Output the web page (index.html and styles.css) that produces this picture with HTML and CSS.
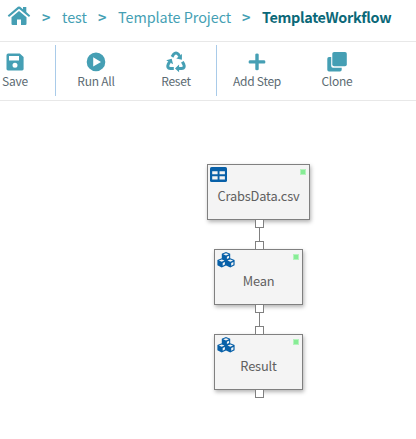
FILE: index.html
```html
<!DOCTYPE html>
<html lang="en">
<head>
<meta charset="utf-8">
<title>TemplateWorkflow</title>
<link rel="stylesheet" href="styles.css">
</head>
<body>
<svg width="0" height="0" class="defs" aria-hidden="true">
  <symbol id="cubes" viewBox="0 0 18 16">
    <path class="cube" d="M9 .1 13.2 1.7V6.3L17.6 8V13.3L13.3 15.6 9 13.5 4.7 15.6.4 13.3V8L4.8 6.3V1.7Z"/>
    <path class="cube-top" d="M6.2 2.3 9 1.2 11.8 2.3 9 3.4ZM1.9 8.6 4.7 7.5 7.5 8.6 4.7 9.7ZM10.5 8.6 13.3 7.5 16.1 8.6 13.3 9.7Z"/>
    <path class="cube-side" d="M9.9 4.7 12.1 3.8V6L9.9 6.9ZM5.7 11 7.9 10.1V12.5L5.7 13.7ZM14.2 11 16.4 10.1V12.5L14.2 13.7Z"/>
  </symbol>
</svg>
<nav class="breadcrumb">
  <svg class="home" width="24" height="20" viewBox="0 0 24 20"><path d="M12 4.9 19.5 11.2V17.8Q19.5 19 18.3 19H14V13.4H10V19H5.7Q4.5 19 4.5 17.8V11.2Z"/><path d="M12 .4Q12.6.4 13.1.8L16 3.2V1H19.3V6L23.2 9.4 22 10.9 12 2.7 2 10.9.7 9.4 10.9.8Q11.4.4 12 .4Z"/></svg>
  <b class="sep">&gt;</b>
  <a class="crumb c1">test</a>
  <b class="sep">&gt;</b>
  <a class="crumb c2">Template Project</a>
  <b class="sep">&gt;</b>
  <b class="crumb current">TemplateWorkflow</b>
</nav>
<div class="toolbar">
  <div class="group">
    <div class="tool"><svg width="22" height="22" viewBox="0 0 22 22"><path fill-rule="evenodd" d="M4.2 2.5H15.8L19.6 6V18Q19.6 19.4 18.1 19.4H4Q2.5 19.4 2.5 18V4.2Q2.5 2.5 4.2 2.5ZM5 5V9.5H15V5ZM11 11.8A2.5 2.5 0 1 0 11 16.8 2.5 2.5 0 1 0 11 11.8Z"/></svg><span>Save</span></div>
  </div>
  <div class="group">
    <div class="tool"><svg width="22" height="22" viewBox="0 0 22 22"><path fill-rule="evenodd" d="M11 1.6A9.3 9.3 0 1 0 11 20.2 9.3 9.3 0 1 0 11 1.6ZM8.2 6.3 16 10.9 8.2 15.5Z"/></svg><span>Run All</span></div>
    <div class="tool"><svg width="22" height="22" viewBox="0 0 22 22"><g class="recycle-lines"><path d="M7 5.9 8.6 3.3Q11 .8 13.4 3.3L14.6 5.3"/><path d="M17.4 10.8 18.7 13.2Q20.4 17.1 16.6 17.6H13.6"/><path d="M8.8 17.6H5.4Q1.6 17.1 3.2 13.4L4.6 10.8"/></g><path d="M16.9 3.1V8.7L11.3 7.4ZM14.1 13.6V21.2L10 17.5ZM1.2 9.2 6.7 7.8 8.1 13.2Z"/></svg><span>Reset</span></div>
  </div>
  <div class="group last">
    <div class="tool"><svg width="22" height="22" viewBox="0 0 22 22"><path d="M9.3 3.6Q9.3 2.5 11 2.5T12.7 3.6V9.3H18.2Q19.4 9.3 19.4 10.9T18.2 12.5H12.7V18.2Q12.7 19.3 11 19.3T9.3 18.2V12.5H3.8Q2.6 12.5 2.6 10.9T3.8 9.3H9.3Z"/></svg><span>Add Step</span></div>
    <div class="tool"><svg width="22" height="22" viewBox="0 0 22 22"><rect x="6.3" y="1" width="14.5" height="14.3" rx="1.8"/><path d="M5.2 6H3Q1.3 6 1.3 7.8V18.7Q1.3 20.5 3 20.5H14Q15.7 20.5 15.7 18.7V16.8H7Q5.2 16.8 5.2 15Z"/></svg><span>Clone</span></div>
  </div>
</div>
<main class="canvas">
  <div class="node wide">
    <svg class="icon" width="17" height="15" viewBox="0 0 17 15"><rect width="17" height="15" rx="1.6"/><path class="cube-side" d="M2.2 4.2H7.6V7.2H2.2ZM9.5 4.2H14.9V7.2H9.5ZM2.2 9.3H7.6V12.4H2.2ZM9.5 9.3H14.9V12.4H9.5Z"/></svg>
    <i class="status"></i><span>CrabsData.csv</span>
  </div>
  <div class="port out"></div><div class="link"></div><div class="port in"></div>
  <div class="node">
    <svg class="icon" width="18" height="16"><use href="#cubes"/></svg>
    <i class="status"></i><span>Mean</span>
  </div>
  <div class="port out"></div><div class="link"></div><div class="port in"></div>
  <div class="node">
    <svg class="icon" width="18" height="16"><use href="#cubes"/></svg>
    <i class="status"></i><span>Result</span>
  </div>
  <div class="port out"></div>
</main>
</body>
</html>
```

FILE: styles.css
```css
* { box-sizing: border-box; }
body {
  margin: 0;
  background: #fff;
  overflow: hidden;
  font-family: "Noto Sans CJK SC", "Noto Sans", sans-serif;
}
svg { display: block; flex: none; }
.defs { position: absolute; }
.breadcrumb {
  height: 42px;
  border-bottom: 1px solid #e8e8e8;
  display: flex;
  align-items: flex-start;
  padding: 6px 0 0 7px;
  color: #459fb4;
  font-size: 14.4px;
  line-height: 22px;
  white-space: nowrap;
}
.home { fill: #459fb4; }
.sep { width: 9px; margin: 0 11px; }
.crumb { flex: none; letter-spacing: -.05px; }
.c1 { width: 25px; }
.c2 { width: 113px; }
.current { color: #0b6878; letter-spacing: -.32px; }
.toolbar {
  height: 59px;
  border-bottom: 1px solid #e8e8e8;
  display: flex;
  padding-top: 3px;
  margin-left: -25px;
}
.group {
  display: flex;
  flex: none;
  height: 51px;
  border-right: 1px solid #a9cbe9;
}
.group.last { border-right: 0; }
.tool {
  width: 80px;
  padding-top: 6px;
  display: flex;
  flex-direction: column;
  align-items: center;
  font-size: 12px;
  line-height: 16px;
  letter-spacing: -.25px;
  color: #5c6b73;
  white-space: nowrap;
}
.tool svg { fill: #459fb4; }
.recycle-lines { fill: none; stroke: #459fb4; stroke-width: 3; }
.canvas {
  display: flex;
  flex-direction: column;
  align-items: center;
  width: 103px;
  margin: 63px 0 0 207px;
}
.node {
  position: relative;
  flex: none;
  width: 89px;
  height: 56px;
  border: 1px solid #808080;
  background: #f4f4f4;
  box-shadow: 1px 2px 4px rgba(0, 0, 0, .3);
  display: flex;
  align-items: center;
  justify-content: center;
  padding-top: 7px;
  font-size: 12.8px;
  line-height: 20px;
  letter-spacing: -.15px;
  color: #606060;
}
.node.wide { width: 103px; }
.icon { position: absolute; left: 2px; top: 2px; fill: #0860a8; }
.cube-top, .cube-side { fill: #f4f4f4; }
.status {
  position: absolute;
  right: 3px;
  top: 4px;
  width: 6px;
  height: 6px;
  background: #87ec96;
  border: 1px solid #b5f3bd;
}
.port {
  position: relative;
  flex: none;
  left: .5px;
  width: 9px;
  height: 9px;
  background: #fff;
  border: 1px solid #808080;
}
.out { margin-top: -1px; }
.in { margin-bottom: -1px; z-index: 1; }
.in + .node { z-index: 0; }
.link { width: 1px; height: 13px; background: #808080; position: relative; left: .5px; }
```
